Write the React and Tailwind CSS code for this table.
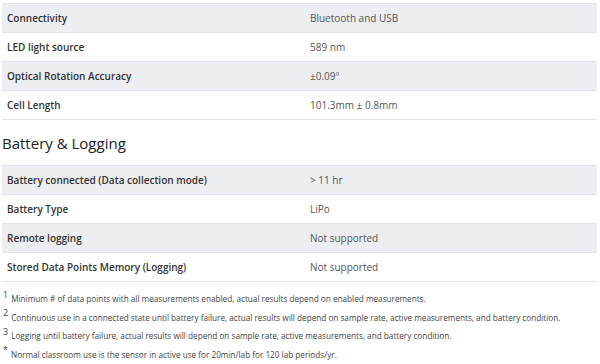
const specs = [
  ["Connectivity", "Bluetooth and USB"],
  ["LED light source", "589 nm"],
  ["Optical Rotation Accuracy", "±0.09º"],
  ["Cell Length", "101.3mm ± 0.8mm"],
];

const battery = [
  ["Battery connected (Data collection mode)", "> 11 hr"],
  ["Battery Type", "LiPo"],
  ["Remote logging", "Not supported"],
  ["Stored Data Points Memory (Logging)", "Not supported"],
];

const notes = [
  ["1", "Minimum # of data points with all measurements enabled, actual results depend on enabled measurements."],
  ["2", "Continuous use in a connected state until battery failure, actual results will depend on sample rate, active measurements, and battery condition."],
  ["3", "Logging until battery failure, actual results will depend on sample rate, active measurements, and battery condition."],
  ["*", "Normal classroom use is the sensor in active use for 20min/lab for 120 lab periods/yr."],
];

function SpecTable({ rows }) {
  return (
    <div className="border-t border-[#dfe2e6]">
      {rows.map(([label, value], i) => (
        <div
          key={label}
          className={`flex h-[29px] items-center border-b border-[#dfe2e6] text-[10px] ${i % 2 === 0 ? "bg-[#eceef1]" : "bg-white"}`}
        >
          <div className="w-[308px] pl-[5px] font-semibold text-[#333]">{label}</div>
          <div className="flex-1 text-[#555]">{value}</div>
        </div>
      ))}
    </div>
  );
}

export default function App() {
  return (
    <div className="h-[364px] w-[600px] overflow-hidden bg-white pl-[2px] pr-[3px] pt-[3px]" style={{ fontFamily: '"Open Sans", sans-serif' }}>
      <SpecTable rows={specs} />
      <h2 className="mt-[11px] mb-[10px] text-[15px] leading-[24px] text-[#222]">Battery &amp; Logging</h2>
      <SpecTable rows={battery} />
      <div className="mt-[9px] flex flex-col gap-[3px] pl-[1px] text-[8.2px] text-[#444]">
        {notes.map(([n, text]) => (
          <p key={n} className="leading-[15.5px]">
            <sup className="mr-[3px] text-[9px]">{n}</sup>
            {text}
          </p>
        ))}
      </div>
    </div>
  );
}
